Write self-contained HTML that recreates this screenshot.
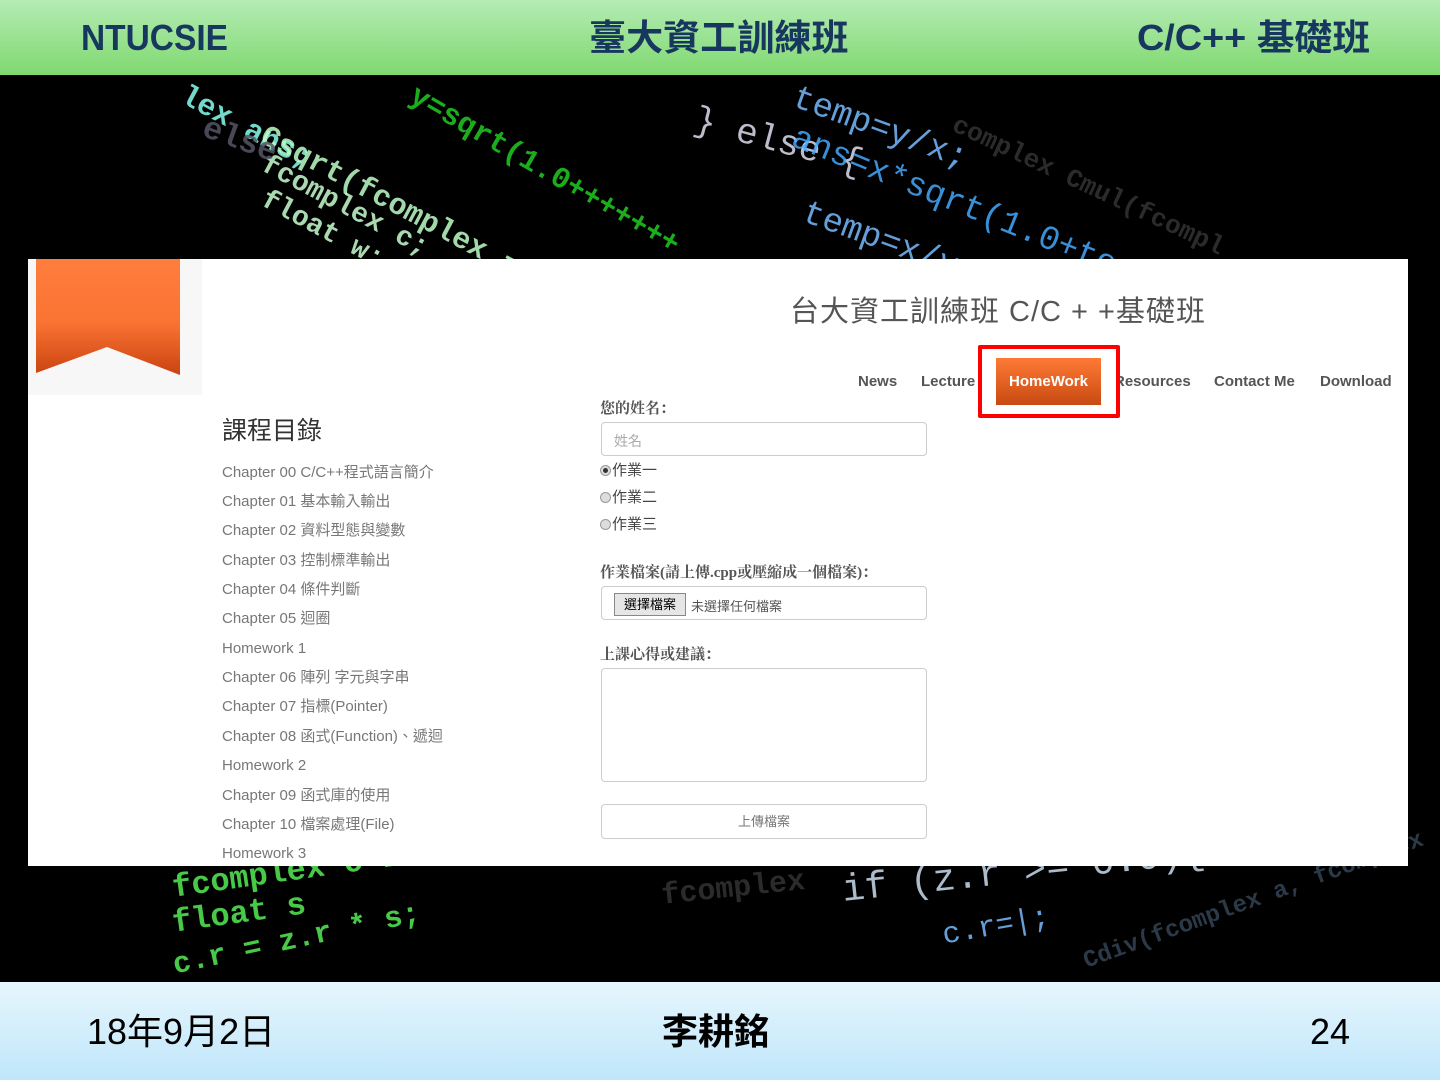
<!DOCTYPE html>
<html><head><meta charset="utf-8">
<style>
*{margin:0;padding:0;box-sizing:border-box}
body{width:1440px;height:1080px;position:relative;overflow:hidden;background:#000;font-family:"Liberation Sans","Noto Sans CJK TC",sans-serif}
.top{position:absolute;left:0;top:0;width:1440px;height:75px;background:linear-gradient(#b4ecb4,#80d870);color:#17375e;font-weight:bold;font-size:36px}
.top span{position:absolute;top:18px;line-height:40px;transform-origin:left center}
.bot{position:absolute;left:0;top:982px;width:1440px;height:98px;background:linear-gradient(#e6f6fd,#bfe6fa);color:#000;font-size:36px}
.bot span{position:absolute;top:10px;line-height:44px}
.code{position:absolute;font-family:"Liberation Mono",monospace;font-weight:bold;white-space:nowrap;opacity:.85}
.panel{position:absolute;left:28px;top:259px;width:1380px;height:607px;background:#fff;overflow:hidden}
.a{position:absolute;white-space:nowrap}
.ch{position:absolute;left:194px;font-size:15px;color:#777;line-height:18px}
.nav{position:absolute;top:114px;font-size:15px;font-weight:bold;color:#555}
.lbl{position:absolute;left:572px;font-size:15px;font-weight:bold;color:#555;font-family:"Liberation Serif","Noto Serif CJK SC",serif}
.box{position:absolute;left:573px;width:326px;border:1px solid #ccc;border-radius:4px;background:#fff}
.rad{position:absolute;left:572px;font-size:15px;color:#444}
.rad i{display:inline-block;width:11px;height:11px;border-radius:50%;border:1px solid #999;background:#ddd;vertical-align:-1px;margin-right:1px;position:relative}
</style></head><body>
<div class="code" style="left:190px;top:80px;color:#8fe;font-size:30px;transform:rotate(28deg);transform-origin:left top">lex ans;</div>
<div class="code" style="left:270px;top:120px;color:#bfffc8;font-size:30px;transform:rotate(28deg);transform-origin:left top">Csqrt(fcomplex z)</div>
<div class="code" style="left:270px;top:150px;color:#c8ffd0;font-size:28px;transform:rotate(28deg);transform-origin:left top">fcomplex c;</div>
<div class="code" style="left:270px;top:185px;color:#c8ffd0;font-size:28px;transform:rotate(28deg);transform-origin:left top">float w;</div>
<div class="code" style="left:420px;top:80px;color:#2c2;font-size:30px;transform:rotate(30deg);transform-origin:left top">y=sqrt(1.0+++++++</div>
<div class="code" style="left:210px;top:110px;color:#556;font-size:32px;transform:rotate(20deg);transform-origin:left top">else</div>
<div class="code" style="left:700px;top:100px;color:#dde;font-size:36px;font-weight:normal;transform:rotate(15deg);transform-origin:left top">} else {</div>
<div class="code" style="left:800px;top:80px;color:#7bf;font-size:34px;font-weight:normal;transform:rotate(20deg);transform-origin:left top">temp=y/x;</div>
<div class="code" style="left:800px;top:120px;color:#4af;font-size:34px;font-weight:normal;transform:rotate(22deg);transform-origin:left top">ans=x*sqrt(1.0+temp</div>
<div class="code" style="left:810px;top:195px;color:#7bf;font-size:34px;font-weight:normal;transform:rotate(20deg);transform-origin:left top">temp=x/y;</div>
<div class="code" style="left:960px;top:110px;color:#333;font-size:26px;transform:rotate(25deg);transform-origin:left top">complex Cmul(fcompl</div>
<div class="code" style="left:170px;top:870px;color:#5e5;font-size:32px;transform:rotate(-8deg);transform-origin:left top">fcomplex c=1.0 / (z.r</div>
<div class="code" style="left:170px;top:905px;color:#5e5;font-size:32px;transform:rotate(-8deg);transform-origin:left top">float s</div>
<div class="code" style="left:170px;top:950px;color:#5e5;font-size:30px;transform:rotate(-12deg);transform-origin:left top">c.r = z.r * s;</div>
<div class="code" style="left:840px;top:870px;color:#cde;font-size:38px;font-weight:normal;transform:rotate(-6deg);transform-origin:left top">if (z.r &gt;= 0.0){</div>
<div class="code" style="left:940px;top:920px;color:#7bf;font-size:30px;font-weight:normal;transform:rotate(-10deg);transform-origin:left top">c.r=|;</div>
<div class="code" style="left:660px;top:880px;color:#333;font-size:30px;transform:rotate(-6deg);transform-origin:left top">fcomplex</div>
<div class="code" style="left:1080px;top:950px;color:#345;font-size:24px;transform:rotate(-20deg);transform-origin:left top">Cdiv(fcomplex a, fcomplex</div>

<div class="top"><span style="left:81px;transform:scaleX(.93)">NTUCSIE</span><span style="left:589px;transform:scaleX(1.03)">臺大資工訓練班</span><span style="left:1137px;transform:scaleX(1.05)">C/C++ 基礎班</span></div>

<div class="panel">
  <div class="a" style="left:0;top:0;width:174px;height:136px;background:#f7f7f7"></div>
  <svg class="a" style="left:6px;top:0" width="148" height="120" viewBox="0 0 148 120">
    <defs><linearGradient id="g" x1="0" y1="0" x2="0" y2="1"><stop offset="0" stop-color="#ff7d3d"/><stop offset=".55" stop-color="#fa7333"/><stop offset="1" stop-color="#c94310"/></linearGradient></defs>
    <path d="M2 0H146V116L73 88L2 114Z" fill="url(#g)"/>
  </svg>
  <div class="a" style="left:762px;top:29px;font-size:29px;color:#555;letter-spacing:1px">台大資工訓練班 C/C + +基礎班</div>
  <div class="nav" style="left:830px">News</div>
  <div class="nav" style="left:893px">Lecture</div>
  <div class="nav" style="left:1086px">Resources</div>
  <div class="nav" style="left:1186px">Contact Me</div>
  <div class="nav" style="left:1292px">Download</div>
  <div class="a" style="left:950px;top:86px;width:142px;height:73px;border:4px solid #f00;border-radius:2px;background:#fff"></div>
  <div class="a" style="left:968px;top:99px;width:105px;height:47px;background:linear-gradient(#ff7a35,#c84a12);color:#fff;font-size:15px;font-weight:bold;text-align:center;line-height:47px">HomeWork</div>

  <div class="a" style="left:194px;top:152px;font-size:25px;color:#333">課程目錄</div>
  <div class="ch" style="top:205px">Chapter 00 C/C++程式語言簡介</div>
  <div class="ch" style="top:234px">Chapter 01 基本輸入輸出</div>
  <div class="ch" style="top:263px">Chapter 02 資料型態與變數</div>
  <div class="ch" style="top:293px">Chapter 03 控制標準輸出</div>
  <div class="ch" style="top:322px">Chapter 04 條件判斷</div>
  <div class="ch" style="top:351px">Chapter 05 迴圈</div>
  <div class="ch" style="top:381px">Homework 1</div>
  <div class="ch" style="top:410px">Chapter 06 陣列 字元與字串</div>
  <div class="ch" style="top:439px">Chapter 07 指標(Pointer)</div>
  <div class="ch" style="top:469px">Chapter 08 函式(Function)、遞迴</div>
  <div class="ch" style="top:498px">Homework 2</div>
  <div class="ch" style="top:528px">Chapter 09 函式庫的使用</div>
  <div class="ch" style="top:557px">Chapter 10 檔案處理(File)</div>
  <div class="ch" style="top:586px">Homework 3</div>

  <div class="lbl" style="top:138px">您的姓名：</div>
  <div class="box" style="top:163px;height:34px;font-size:14px;color:#aaa;padding:8px 12px">姓名</div>
  <div class="rad" style="top:200px"><i><b style="position:absolute;left:2px;top:2px;width:5px;height:5px;border-radius:50%;background:#333"></b></i>作業一</div>
  <div class="rad" style="top:227px"><i></i>作業二</div>
  <div class="rad" style="top:254px"><i></i>作業三</div>
  <div class="lbl" style="top:302px">作業檔案(請上傳.cpp或壓縮成一個檔案)：</div>
  <div class="box" style="top:327px;height:34px"></div>
  <div class="a" style="left:586px;top:334px;width:72px;height:23px;background:#e6e6e6;border:1px solid #888;font-size:13px;color:#000;text-align:center;line-height:21px">選擇檔案</div>
  <div class="a" style="left:663px;top:337px;font-size:13px;color:#555">未選擇任何檔案</div>
  <div class="lbl" style="top:384px">上課心得或建議：</div>
  <div class="box" style="top:409px;height:114px"></div>
  <div class="box" style="top:545px;height:35px;text-align:center;font-size:13px;color:#777;line-height:33px">上傳檔案</div>
</div>

<div class="bot"><span style="left:87px;top:28px">18年9月2日</span><span style="left:662px;top:28px;font-weight:bold">李耕銘</span><span style="left:1310px;top:28px">24</span></div>
</body></html>
